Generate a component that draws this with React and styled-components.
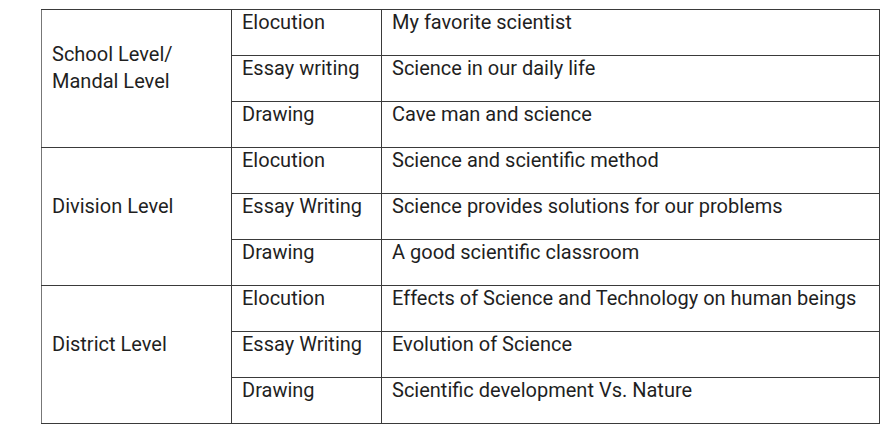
import styled, { createGlobalStyle } from "styled-components";

const GlobalStyle = createGlobalStyle`
  html, body {
    margin: 0;
    padding: 0;
    background: #ffffff;
  }
`;

const data = [
  {
    level: ["School Level/", "Mandal Level"],
    items: [
      ["Elocution", "My favorite scientist"],
      ["Essay writing", "Science in our daily life"],
      ["Drawing", "Cave man and science"],
    ],
  },
  {
    level: ["Division Level"],
    items: [
      ["Elocution", "Science and scientific method"],
      ["Essay Writing", "Science provides solutions for our problems"],
      ["Drawing", "A good scientific classroom"],
    ],
  },
  {
    level: ["District Level"],
    items: [
      ["Elocution", "Effects of Science and Technology on human beings"],
      ["Essay Writing", "Evolution of Science"],
      ["Drawing", "Scientific development Vs. Nature"],
    ],
  },
];

const App = () => {
  return (
    <Page>
      <GlobalStyle />
      <Table>
        <colgroup>
          <col style={{ width: 190 }} />
          <col style={{ width: 150 }} />
          <col style={{ width: 498 }} />
        </colgroup>
        <tbody>
          {data.map((group) =>
            group.items.map((item, i) => (
              <Row key={group.level[0] + i}>
                {i === 0 && (
                  <LevelCell rowSpan={group.items.length}>
                    {group.level.map((line) => (
                      <div key={line}>{line}</div>
                    ))}
                  </LevelCell>
                )}
                <Cell>{item[0]}</Cell>
                <Cell>{item[1]}</Cell>
              </Row>
            ))
          )}
        </tbody>
      </Table>
    </Page>
  );
};

const Page = styled.div`
  padding: 9px 0 0 41px;
`;

const Table = styled.table`
  border-collapse: collapse;
  table-layout: fixed;
  width: 839px;
  font-family: Roboto, "Liberation Sans", sans-serif;
  font-size: 20px;
  color: #1f1f1f;
`;

const Row = styled.tr`
  height: 46px;
`;

const Cell = styled.td`
  border: 1px solid #3a3a3a;
  padding: 1px 10px 0 10px;
  vertical-align: top;
  line-height: 23px;
  white-space: nowrap;
`;

const LevelCell = styled(Cell)`
  vertical-align: middle;
  padding: 0 10px 21px 10px;
  line-height: 27px;
  border-left-color: #777;
`;

export default App;
